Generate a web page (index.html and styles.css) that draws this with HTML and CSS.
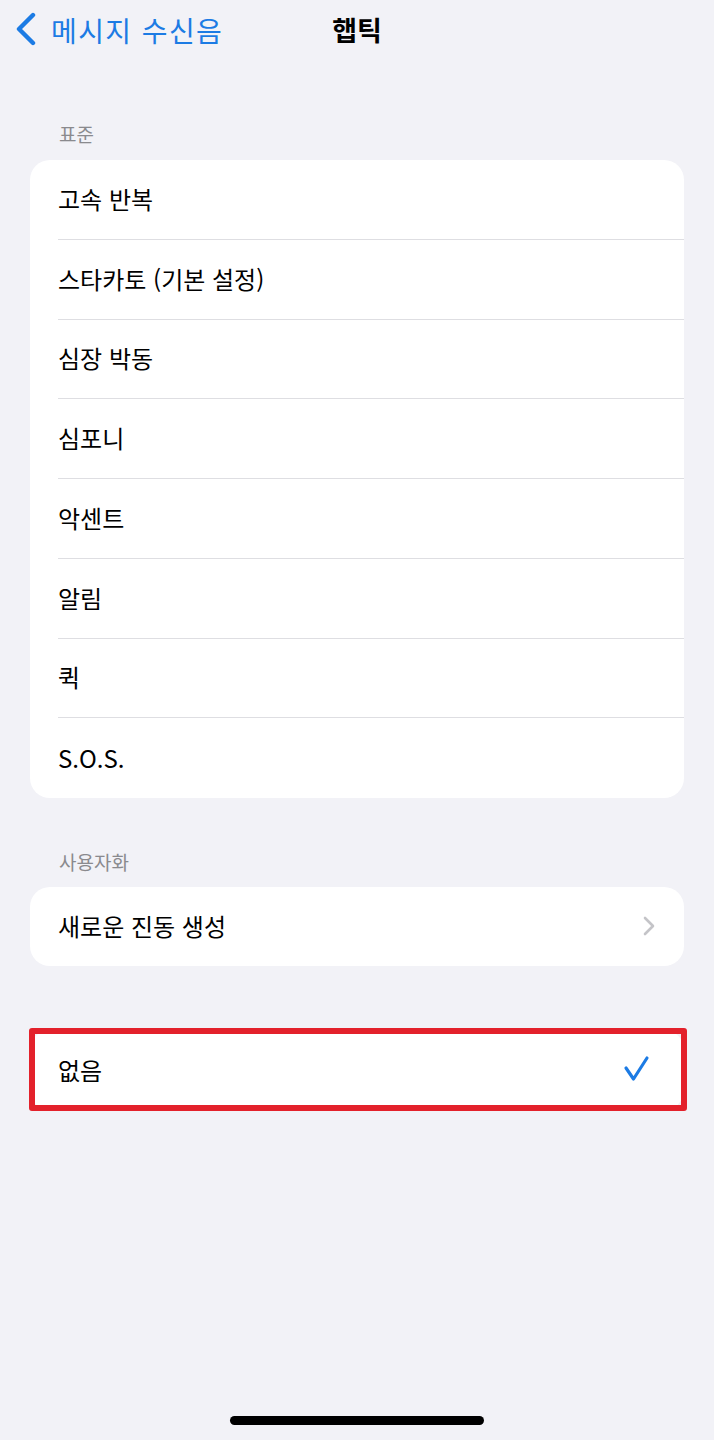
FILE: index.html
```html
<!DOCTYPE html>
<html lang="ko">
<head>
<meta charset="utf-8">
<link rel="stylesheet" href="styles.css">
</head>
<body>
<div class="screen">
  <header class="nav">
    <div class="back">
      <svg class="back-icon" width="24" height="36" viewBox="0 0 24 36"><path d="M19 3 L5 17 L19 31" fill="none" stroke="#1c7be4" stroke-width="4.4" stroke-linecap="round" stroke-linejoin="round"/></svg>
      <span class="back-text">메시지 수신음</span>
    </div>
    <div class="title">햅틱</div>
    <div></div>
  </header>

  <div class="label label-first">표준</div>
  <div class="card">
    <div class="row"><span>고속 반복</span></div>
    <div class="row"><span>스타카토 (기본 설정)</span></div>
    <div class="row"><span>심장 박동</span></div>
    <div class="row"><span>심포니</span></div>
    <div class="row"><span>악센트</span></div>
    <div class="row"><span>알림</span></div>
    <div class="row"><span>퀵</span></div>
    <div class="row"><span>S.O.S.</span></div>
  </div>

  <div class="label label-second">사용자화</div>
  <div class="card">
    <div class="row row-single"><span>새로운 진동 생성</span>
      <svg class="chevron" width="14" height="22" viewBox="0 0 14 22"><path d="M3 3 L11 11 L3 19" fill="none" stroke="#c4c4c8" stroke-width="2.6" stroke-linecap="round" stroke-linejoin="round"/></svg>
    </div>
  </div>

  <div class="card card-none">
    <div class="row row-single"><span>없음</span>
      <svg class="check" width="30" height="28" viewBox="0 0 30 28"><path d="M4 13 L11.5 24 L25 3" fill="none" stroke="#1c7be4" stroke-width="3.2" stroke-linecap="round" stroke-linejoin="round"/></svg>
    </div>
    <div class="highlight"></div>
  </div>

  <div class="home-indicator"></div>
</div>
</body>
</html>
```

FILE: styles.css
```css
html, body {
  margin: 0;
  padding: 0;
  background: #f2f2f7;
}
.screen {
  position: relative;
  width: 714px;
  height: 1440px;
  overflow: hidden;
  font-family: "Noto Sans CJK KR", "Noto Sans", sans-serif;
  color: #000;
}
.nav {
  height: 60px;
  display: grid;
  grid-template-columns: 1fr auto 1fr;
  align-items: center;
}
.back {
  display: flex;
  align-items: center;
  padding-left: 14px;
  gap: 13px;
  color: #1c7be4;
}
.back-icon {
  display: block;
}
.back-text {
  font-size: 28px;
  line-height: 36px;
  letter-spacing: 1.4px;
}
.title {
  font-size: 27px;
  font-weight: 700;
  line-height: 36px;
}
.label {
  padding-left: 59px;
  height: 24px;
  line-height: 24px;
  font-size: 19px;
  color: #8a8a8e;
}
.label-first {
  margin-top: 62px;
  margin-bottom: 14px;
}
.label-second {
  margin-top: 52px;
  margin-bottom: 13px;
}
.card {
  position: relative;
  margin: 0 30px;
  background: #fff;
  border-radius: 20px;
}
.row {
  height: 79.75px;
  margin-left: 28px;
  padding-right: 28px;
  padding-bottom: 2px;
  display: flex;
  align-items: center;
  justify-content: space-between;
  box-sizing: border-box;
  border-bottom: 1px solid #dedee2;
  font-size: 24px;
}
.row:last-child,
.row-single {
  border-bottom: none;
}
.row-single {
  height: 79px;
}
.chevron {
  display: block;
}
.card-none {
  margin-top: 64px;
  height: 80px;
}
.card-none .row {
  height: 80px;
  padding-right: 32px;
}
.check {
  display: block;
}
.highlight {
  position: absolute;
  left: -1px;
  right: -3px;
  top: -2px;
  bottom: -1px;
  border: 6px solid #e3212b;
  border-radius: 3px;
}
.home-indicator {
  position: absolute;
  left: 230px;
  top: 1416px;
  width: 254px;
  height: 9px;
  border-radius: 5px;
  background: #000;
}
```
